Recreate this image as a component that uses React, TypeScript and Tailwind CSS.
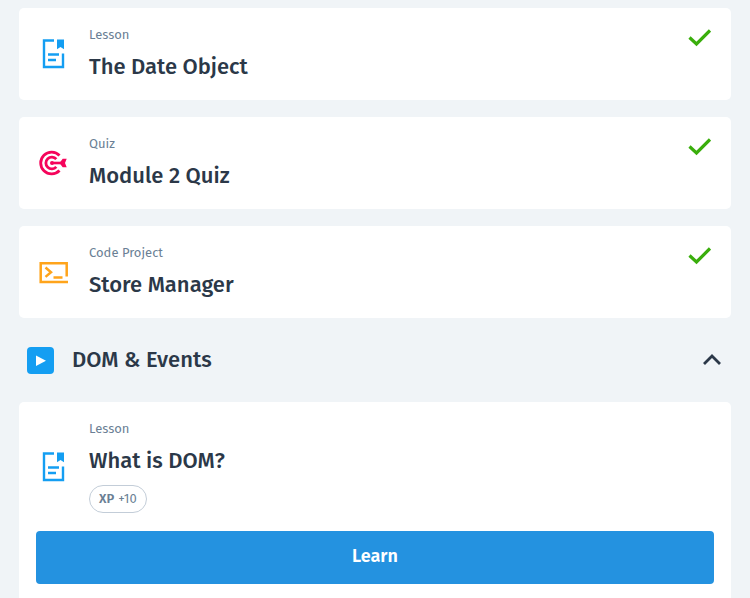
import type { ReactNode } from "react";

function LessonIcon() {
  return (
    <svg width="30" height="30" viewBox="0 0 30 30" fill="none" aria-hidden="true">
      <path d="M15 1.500H5V28h19V14.500" stroke="#149ef2" strokeWidth="2.400" />
      <path d="M18 .5h7v9.700L21.500 8 18 10.200z" fill="#149ef2" />
      <path d="M9 15.500h11M9 21h8" stroke="#149ef2" strokeWidth="2.400" />
    </svg>
  );
}

function QuizIcon() {
  return (
    <svg width="30" height="30" viewBox="0 0 30 30" fill="none" stroke="#f5055b" strokeWidth="2.800" aria-hidden="true">
      <path d="M20.500 7.500A10.900 10.900 0 1 0 20.500 22.500" />
      <path d="M17.300 11.200A5.900 5.900 0 1 0 17.300 18.800" />
      <path d="M13 15H23" strokeWidth="2.600" />
      <circle cx="13" cy="15" r="2" fill="#f5055b" stroke="none" />
      <path d="M20.500 15l3.200-4.200h4L26 15l1.700 4.200h-4z" fill="#f5055b" stroke="none" />
    </svg>
  );
}

function CodeIcon() {
  return (
    <svg width="30" height="30" viewBox="0 0 30 30" fill="none" stroke="#ffa41b" strokeWidth="2.500" aria-hidden="true">
      <path d="M27.700 19.500V6.300H1.700v18.700h27.300" />
      <path d="M6.500 10.500l5.500 4.700-5.500 4.700M14.500 20.500h9" />
    </svg>
  );
}

function CheckIcon() {
  return (
    <svg className="shrink-0" width="24" height="20" viewBox="0 0 24 20" fill="none" role="img" aria-label="Completed">
      <path d="M2.500 9.500l7 6.500L23 2.500" stroke="#3aae0c" strokeWidth="3.200" />
    </svg>
  );
}

type ItemProps = {
  kind: string;
  title: string;
  icon: ReactNode;
  done?: boolean;
  xp?: number;
  action?: string;
};

function Item({ kind, title, icon, done, xp, action }: ItemProps) {
  return (
    <li className="rounded-[5px] bg-white">
      <div className="flex items-center gap-5 px-5">
        {icon}
        <div className={xp ? "flex-1 pt-[15px] pb-[18px]" : "flex-1 pt-[15px] pb-[13px]"}>
          <p className="text-[13px] leading-6 text-[#6b7f95]">{kind}</p>
          <h3 className="text-[22px] leading-10 font-medium">{title}</h3>
          {xp && (
            <p className="mt-1 flex h-7 w-fit items-center gap-1 rounded-full border border-[#c3cdd8] px-[9px] text-[13px] text-[#6b7f95]">
              <strong className="font-semibold">XP</strong>
              <span>+{xp}</span>
            </p>
          )}
        </div>
        {done && (
          <div className="self-start pt-5">
            <CheckIcon />
          </div>
        )}
      </div>
      {action && (
        <div className="px-[17px] pb-5">
          <button type="button" className="h-[53px] w-full rounded-[4px] bg-[#2492e0] pb-0.5 text-[18px] font-semibold text-white">
            {action}
          </button>
        </div>
      )}
    </li>
  );
}

export default function App() {
  return (
    <main className="h-screen overflow-hidden bg-[#f0f4f7] px-[19px] pt-2 font-['Fira_Sans','Noto_Sans',sans-serif] text-[#2b3848]">
      <ul className="flex flex-col gap-[17px]">
        <Item kind="Lesson" title="The Date Object" icon={<LessonIcon />} done />
        <Item kind="Quiz" title="Module 2 Quiz" icon={<QuizIcon />} done />
        <Item kind="Code Project" title="Store Manager" icon={<CodeIcon />} done />
      </ul>
      <section>
        <h2>
          <button type="button" aria-expanded="true" className="flex h-[84px] w-full items-center gap-[18px] px-2 pt-px text-left text-[22px] font-medium">
            <svg width="27" height="27" viewBox="0 0 27 27" aria-hidden="true">
              <rect width="27" height="27" rx="4" fill="#149ef2" />
              <path d="M9 8.500l10 5.300-10 5.200z" fill="#fff" />
            </svg>
            <span className="flex-1 pb-0.5">DOM &amp; Events</span>
            <svg width="22" height="22" viewBox="0 0 22 22" fill="none" aria-hidden="true">
              <path d="M3 14l8-8 8 8" stroke="#2b3848" strokeWidth="2.800" />
            </svg>
          </button>
        </h2>
        <ul>
          <Item kind="Lesson" title="What is DOM?" icon={<LessonIcon />} xp={10} action="Learn" />
        </ul>
      </section>
    </main>
  );
}
